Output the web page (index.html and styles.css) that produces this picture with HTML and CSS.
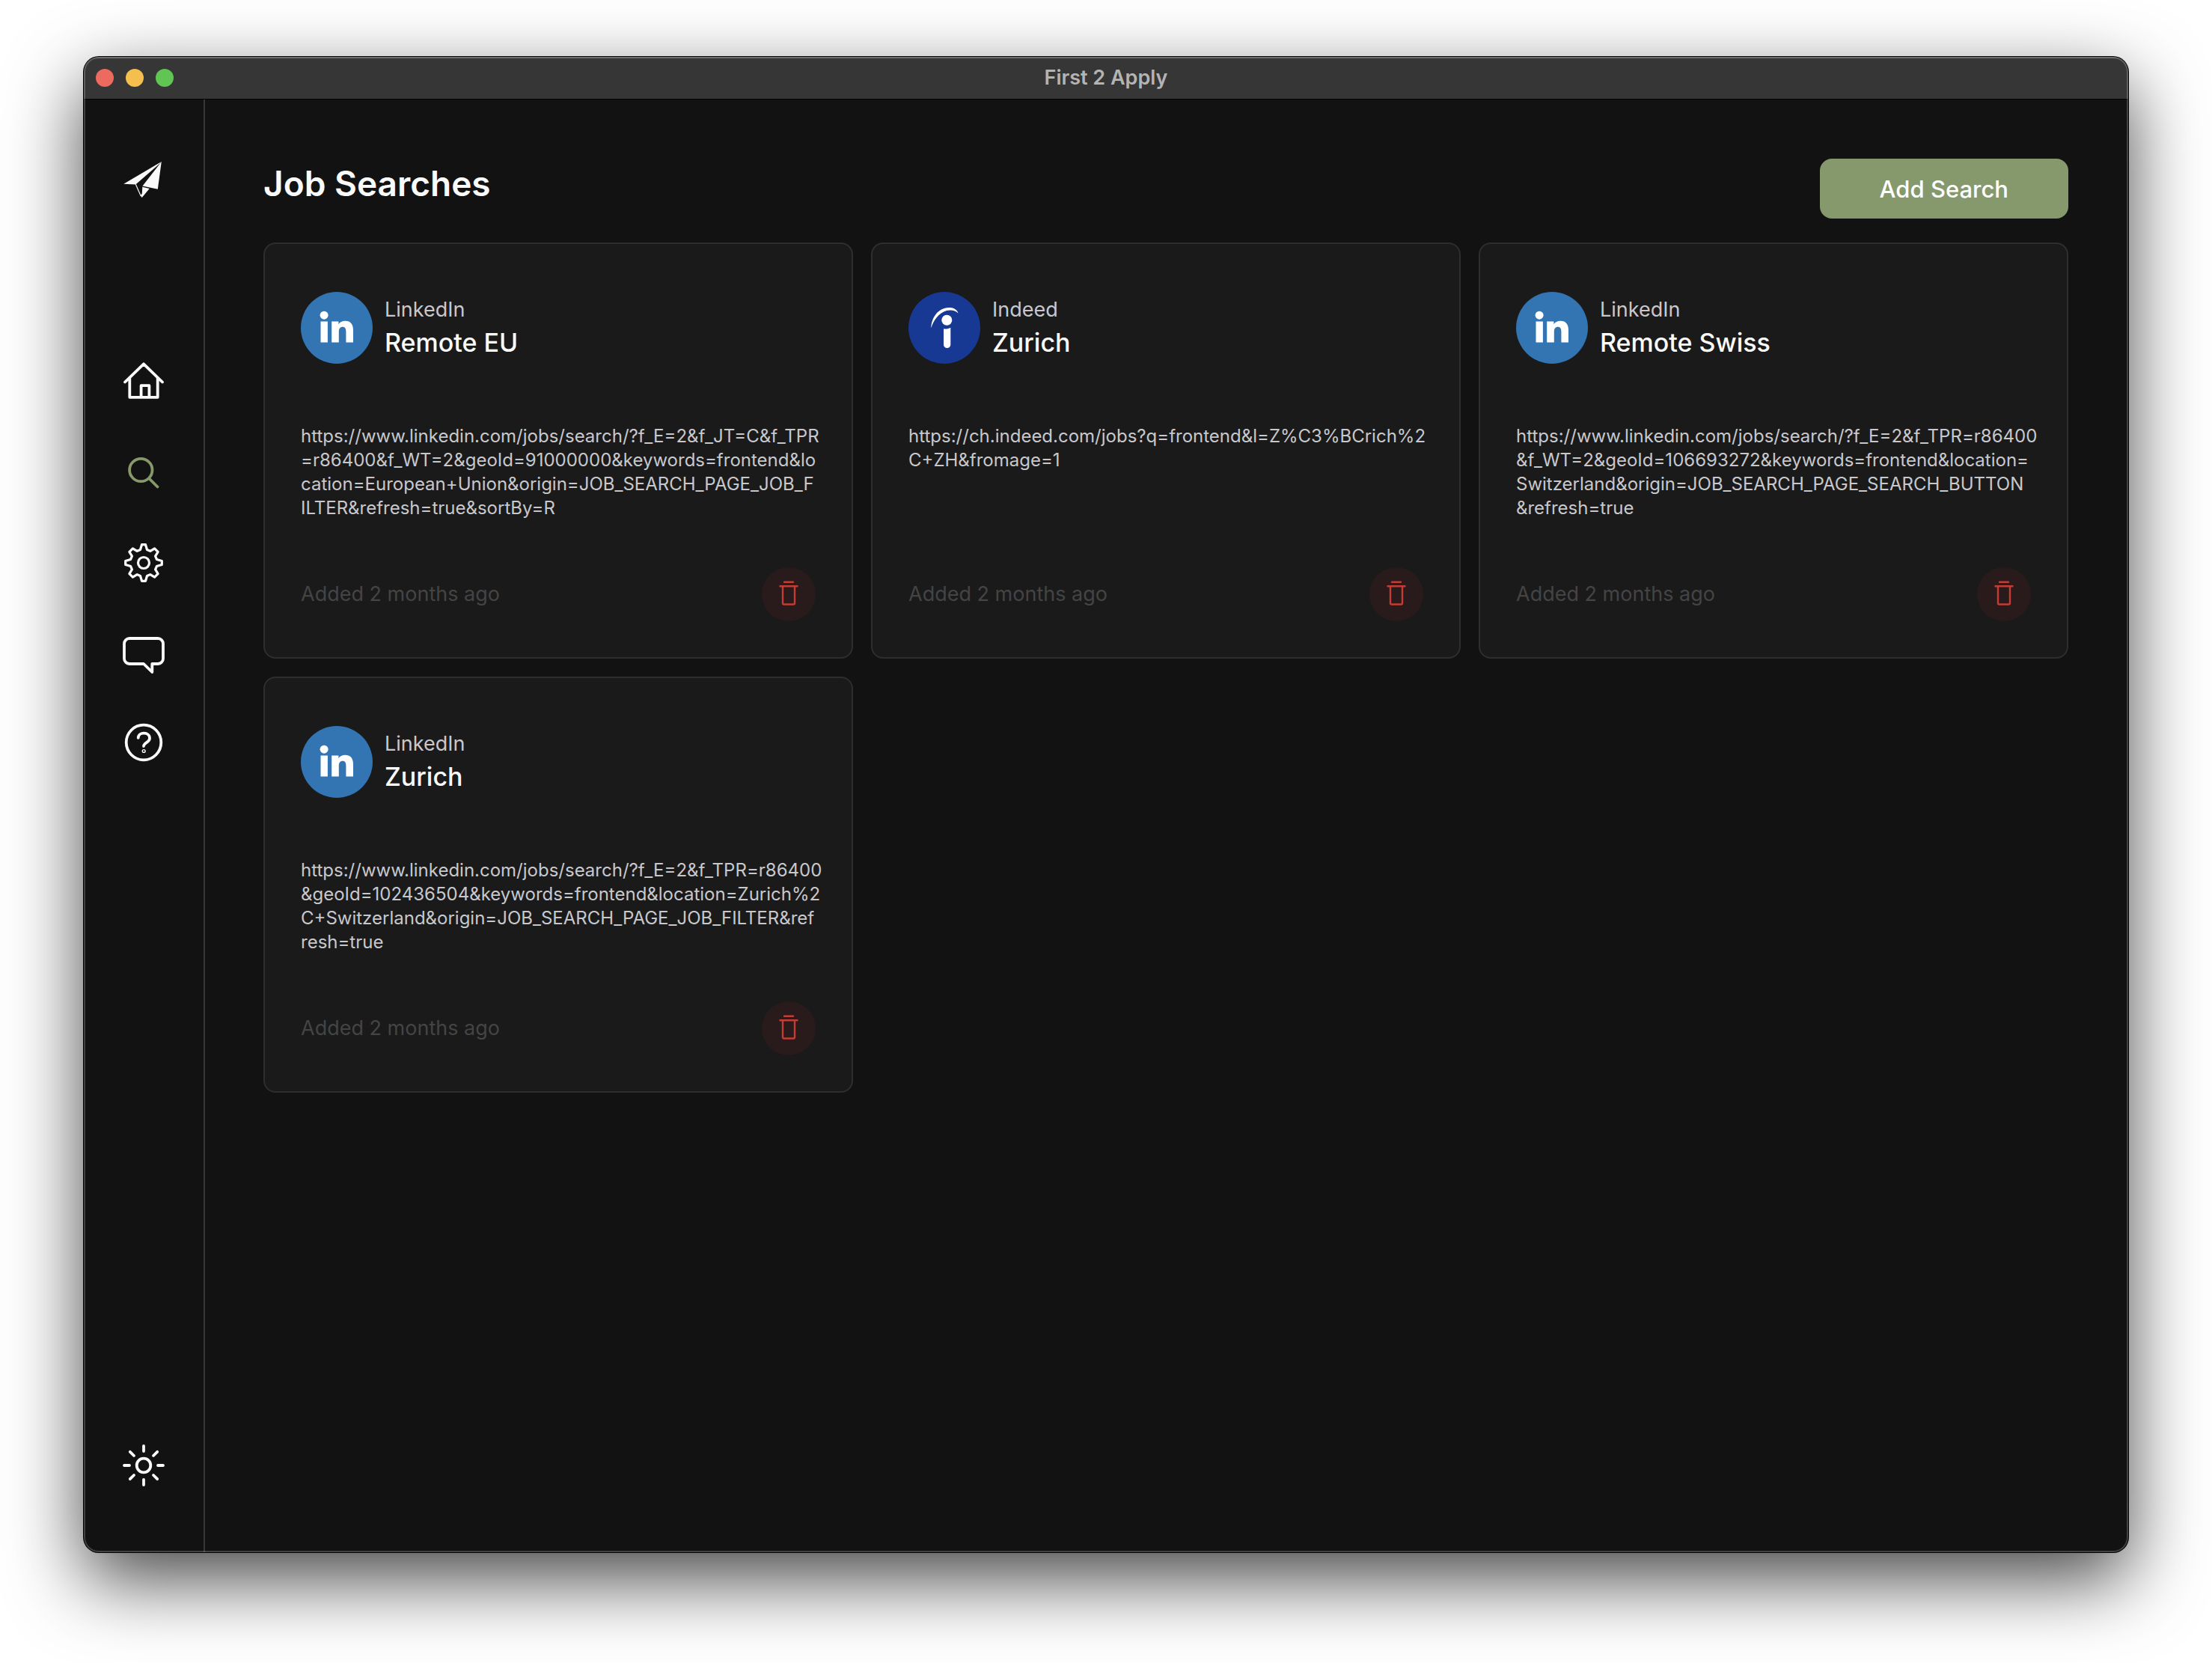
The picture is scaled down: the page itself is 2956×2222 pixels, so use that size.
FILE: index.html
```html
<!DOCTYPE html>
<html lang="en">
<head>
<meta charset="utf-8">
<title>First 2 Apply</title>
<link rel="stylesheet" href="styles.css">
</head>
<body>
<svg class="sprite" aria-hidden="true">
  <symbol id="linkedin" viewBox="0 0 96 96">
    <circle cx="48" cy="48" r="48" fill="#3375b2"/>
    <circle cx="31.1" cy="31.2" r="5.5" fill="#fff"/>
    <path d="M26.5 39.4h9.4v28.2h-9.4zM41.2 39.4h9.2v3.8c1.8-2.9 5-4.5 8.9-4.5 7.6 0 10.7 4.8 10.7 12.6v16.3h-9.6V53c0-4-1.2-6.3-4.4-6.3-3.600 0-5.200 2.500-5.200 6.500v14.400h-9.600z" fill="#fff"/>
  </symbol>
  <symbol id="indeed" viewBox="0 0 96 96">
    <circle cx="48" cy="48" r="48" fill="#173994"/>
    <circle cx="51.300" cy="37.800" r="7" fill="#fff"/>
    <path d="M47 49.300c3.200.600 6.600.100 9.300-1.500v22.600a4.650 4.650 0 0 1-9.300 0z" fill="#fff"/>
    <path d="M30.300 48.200C30.500 35 39.500 21 54 21c6 0 11.600 3.200 12.400 7.400-3.600-3.400-9-5-15.400-3.400C40.500 28 33.500 38 30.300 48.200z" fill="#fff"/>
  </symbol>
  <symbol id="trash" viewBox="0 0 36 36">
    <path d="M12 1.800h12M6.500 7.200h23M10 7.500v22.300q0 1.700 1.700 1.700h12.600q1.700 0 1.700-1.700V7.500" fill="none" stroke="currentColor" stroke-width="2.400" stroke-linecap="round"/>
  </symbol>
</svg>

<div class="window">
  <header class="titlebar">
    <div class="lights">
      <span class="light light-close"></span>
      <span class="light light-min"></span>
      <span class="light light-max"></span>
    </div>
    <div class="window-title">First 2 Apply</div>
  </header>

  <div class="app">
    <aside class="sidebar">
      <a class="nav-link" href="#top" aria-label="First 2 Apply">
        <svg class="icon" viewBox="0 0 56 56" fill="currentColor">
          <path d="M51.800 4 1.300 33.800l16 .700L49.500 6.500z"/>
          <path d="M51.800 4 46.800 40.700 26.500 36.500z"/>
          <path d="M26.300 37.800 35.700 40 25.700 52 23.800 49.500 25.800 46.500z"/>
          <path d="M17.300 34.300 24.300 50" stroke="currentColor" stroke-width="1.200"/>
        </svg>
      </a>
      <nav class="nav" aria-label="Main">
        <a class="nav-link" href="#home" aria-label="Home">
          <svg class="icon line" viewBox="0 0 56 56"><path d="M3 26.500 28 2.300 53 26.500M9.300 21v25.800h37.400V21M24.600 46V31.200h10.800V46"/></svg>
        </a>
        <a class="nav-link active" href="#searches" aria-label="Job searches">
          <svg class="icon line" viewBox="0 0 56 56"><circle cx="24.300" cy="24" r="15.200"/><path d="M35.500 35.500 46.500 46.500"/></svg>
        </a>
        <a class="nav-link" href="#settings" aria-label="Settings">
          <svg class="icon line thin" viewBox="0 0 56 56"><path d="M25.500 3.700h5L32.500 10.500 36.800 12.400 42.600 8.900 47.100 13.400 43.600 19.200 45.500 23.500 52.300 25.500v5L45.500 32.500 43.600 36.800 47.100 42.600 42.600 47.100 36.800 43.600 32.500 45.500 30.500 52.300h-5L23.500 45.500 19.200 43.600 13.400 47.100 8.900 42.600 12.400 36.800 10.500 32.500 3.700 30.500v-5L10.500 23.500 12.400 19.200 8.900 13.400 13.400 8.900 19.200 12.400 23.500 10.500z"/><circle cx="28" cy="28" r="7.500"/></svg>
        </a>
        <a class="nav-link" href="#feedback" aria-label="Feedback">
          <svg class="icon line" viewBox="0 0 56 56"><path d="M9 9h38a7 7 0 0 1 7 7v20a7 7 0 0 1-7 7h-7.700v11L28 43H9a7 7 0 0 1-7-7V16a7 7 0 0 1 7-7z"/></svg>
        </a>
        <a class="nav-link" href="#help" aria-label="Help">
          <svg class="icon line" viewBox="0 0 56 56"><circle cx="28" cy="28" r="23.300"/><path d="M20.700 21.800c.500-8.400 15.300-8.200 15.300.700 0 5.500-7.800 5.500-8 10.500"/><circle cx="28.200" cy="39.500" r=".700"/></svg>
        </a>
      </nav>
      <button class="nav-link theme" type="button" aria-label="Toggle theme">
        <svg class="icon line" viewBox="0 0 56 56"><circle cx="28" cy="28" r="9.300"/><path d="M28 2v7M28 47v7M2 28h7M47 28h7M9.800 9.800 15 15M41 41l5.200 5.200M46.200 9.800 41 15M15 41l-5.200 5.200"/></svg>
      </button>
    </aside>

    <main class="main">
      <div class="page-head">
        <h1>Job Searches</h1>
        <button class="add" type="button">Add Search</button>
      </div>
      <div class="grid">
        <article class="card">
          <div class="card-head">
            <svg class="logo"><use href="#linkedin"/></svg>
            <div><p class="site">LinkedIn</p><h2>Remote EU</h2></div>
          </div>
          <p class="url">https://www.linkedin.com/jobs/search/?f_E=2&amp;f_JT=C&amp;f_TPR<br>=r86400&amp;f_WT=2&amp;geoId=91000000&amp;keywords=frontend&amp;lo<br>cation=European+Union&amp;origin=JOB_SEARCH_PAGE_JOB_F<br>ILTER&amp;refresh=true&amp;sortBy=R</p>
          <div class="card-foot">
            <span>Added 2 months ago</span>
            <button class="delete" type="button" aria-label="Delete search"><svg><use href="#trash"/></svg></button>
          </div>
        </article>
        <article class="card">
          <div class="card-head">
            <svg class="logo"><use href="#indeed"/></svg>
            <div><p class="site">Indeed</p><h2>Zurich</h2></div>
          </div>
          <p class="url">https://ch.indeed.com/jobs?q=frontend&amp;l=Z%C3%BCrich%2<br>C+ZH&amp;fromage=1</p>
          <div class="card-foot">
            <span>Added 2 months ago</span>
            <button class="delete" type="button" aria-label="Delete search"><svg><use href="#trash"/></svg></button>
          </div>
        </article>
        <article class="card">
          <div class="card-head">
            <svg class="logo"><use href="#linkedin"/></svg>
            <div><p class="site">LinkedIn</p><h2>Remote Swiss</h2></div>
          </div>
          <p class="url">https://www.linkedin.com/jobs/search/?f_E=2&amp;f_TPR=r86400<br>&amp;f_WT=2&amp;geoId=106693272&amp;keywords=frontend&amp;location=<br>Switzerland&amp;origin=JOB_SEARCH_PAGE_SEARCH_BUTTON<br>&amp;refresh=true</p>
          <div class="card-foot">
            <span>Added 2 months ago</span>
            <button class="delete" type="button" aria-label="Delete search"><svg><use href="#trash"/></svg></button>
          </div>
        </article>
        <article class="card">
          <div class="card-head">
            <svg class="logo"><use href="#linkedin"/></svg>
            <div><p class="site">LinkedIn</p><h2>Zurich</h2></div>
          </div>
          <p class="url">https://www.linkedin.com/jobs/search/?f_E=2&amp;f_TPR=r86400<br>&amp;geoId=102436504&amp;keywords=frontend&amp;location=Zurich%2<br>C+Switzerland&amp;origin=JOB_SEARCH_PAGE_JOB_FILTER&amp;ref<br>resh=true</p>
          <div class="card-foot">
            <span>Added 2 months ago</span>
            <button class="delete" type="button" aria-label="Delete search"><svg><use href="#trash"/></svg></button>
          </div>
        </article>
      </div>
    </main>
  </div>
</div>
</body>
</html>
```
FILE: styles.css
```css
*,
*::before,
*::after {
  box-sizing: border-box;
}

body {
  margin: 0;
  min-height: 100vh;
  padding: 76px 112px 148px;
  display: flex;
  background: #fff;
  color: #fafafa;
  font-family: Inter, "Liberation Sans", sans-serif;
}

h1,
h2,
p {
  margin: 0;
}

button {
  border: 0;
  padding: 0;
  font: inherit;
  color: inherit;
  background: none;
}

.sprite {
  position: absolute;
  width: 0;
  height: 0;
}

.window {
  position: relative;
  flex: 1;
  display: flex;
  flex-direction: column;
  border-radius: 20px;
  overflow: hidden;
  background: #121212;
  box-shadow: 0 0 0 1px #000, 0 36px 100px rgba(0, 0, 0, 0.73);
}

/* light inner rim of the window frame */
.window::after {
  content: "";
  position: absolute;
  inset: 0;
  border-radius: inherit;
  box-shadow: inset 0 0 0 2px rgba(255, 255, 255, 0.2);
  pointer-events: none;
}

.titlebar {
  display: grid;
  grid-template-columns: 1fr auto 1fr;
  align-items: center;
  height: 57px;
  padding: 0 16px;
  background: #363636;
  border-bottom: 1px solid #000;
  box-shadow: inset 0 2px #4c4c4c;
}

.lights {
  display: flex;
  gap: 16px;
}

.light {
  width: 24px;
  height: 24px;
  border-radius: 50%;
}

.light-close { background: #ec6a5e; }
.light-min { background: #f4bf4f; }
.light-max { background: #61c554; }

.window-title {
  font-size: 27px;
  line-height: 32px;
  font-weight: 600;
  color: #b4b4b4;
}

.app {
  flex: 1;
  display: flex;
}

.sidebar {
  width: 162px;
  display: flex;
  flex-direction: column;
  align-items: center;
  padding: 79px 0 88px;
  border-right: 2px solid #383838;
}

.nav {
  display: flex;
  flex-direction: column;
  gap: 64px;
  margin-top: 216px;
}

.nav-link {
  display: block;
  width: 56px;
  height: 56px;
  color: #fafafa;
}

.nav-link.active {
  color: #87996b;
}

.theme {
  margin-top: auto;
}

.icon {
  display: block;
  width: 56px;
  height: 56px;
}

.line {
  fill: none;
  stroke: currentColor;
  stroke-width: 3.8;
  stroke-linecap: round;
  stroke-linejoin: round;
}

.thin {
  stroke-width: 3.2;
}

.main {
  flex: 1;
  padding: 79px 80px 80px 78px;
}

.page-head {
  display: flex;
  justify-content: space-between;
  align-items: flex-start;
  margin-bottom: 32px;
}

h1 {
  font-size: 46px;
  line-height: 66px;
  font-weight: 600;
}

.add {
  height: 80px;
  padding: 0 80px;
  border-radius: 16px;
  background: #86996d;
  color: #fff;
  font-size: 31px;
  font-weight: 500;
}

.grid {
  display: grid;
  grid-template-columns: repeat(3, 1fr);
  gap: 24px;
}

.card {
  display: flex;
  flex-direction: column;
  padding: 64px 48px 48px;
  border: 2px solid #2e2e32;
  border-radius: 16px;
  background: #1a1a1a;
}

.card-head {
  display: flex;
  align-items: center;
  gap: 16px;
  margin-bottom: 81px;
}

.logo {
  width: 96px;
  height: 96px;
}

.site {
  font-size: 27px;
  line-height: 40px;
  color: #c8c8cc;
}

h2 {
  font-size: 34px;
  line-height: 48px;
  font-weight: 500;
}

.url {
  font-size: 24px;
  line-height: 32px;
  word-break: break-all;
  color: #c8c8cc;
  margin: 0 -16px 63px 0;
}

.card-foot {
  display: flex;
  justify-content: space-between;
  align-items: center;
  margin-top: auto;
  font-size: 27px;
  line-height: 40px;
  color: #444;
}

.delete {
  display: grid;
  place-items: center;
  width: 72px;
  height: 72px;
  border-radius: 50%;
  background: #291b1b;
  color: #c43d35;
}

.delete svg {
  width: 36px;
  height: 36px;
}
```
